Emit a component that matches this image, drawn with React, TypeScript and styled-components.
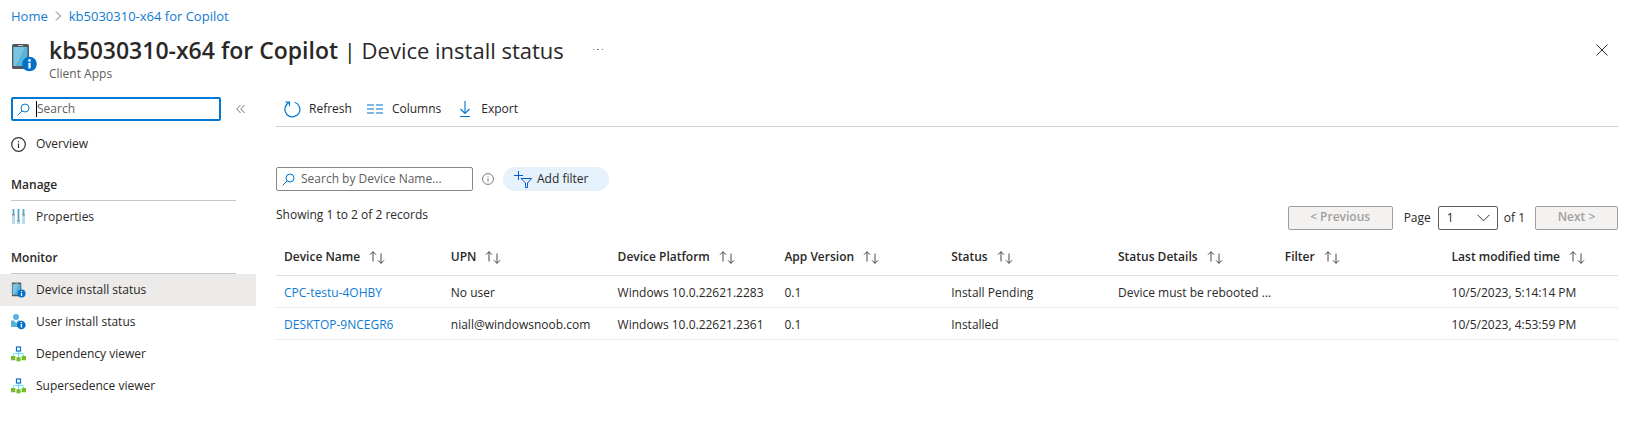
import React from 'react';
import styled, { createGlobalStyle } from 'styled-components';

const color = {
  text: '#292827',
  muted: '#605e5c',
  link: '#0f7bd3',
  accent: '#0078d4',
  line: '#c8c6c4',
  faint: '#edebe9',
};

const GlobalStyle = createGlobalStyle`
  * { box-sizing: border-box; }
  body {
    margin: 0;
    background: #fff;
    color: ${color.text};
    font-family: "Segoe UI", "Open Sans", "Noto Sans", sans-serif;
    font-size: 12px;
    line-height: 16px;
  }
  button, input, select { font: inherit; color: inherit; }
  a { color: ${color.link}; text-decoration: none; }
  svg { display: block; flex: none; }
`;

const Page = styled.div`
  display: flex;
  flex-direction: column;
`;

const Breadcrumb = styled.nav`
  display: flex;
  align-items: center;
  gap: 7px;
  height: 32px;
  padding: 0 11px;
  font-size: 13px;
`;

const Header = styled.header`
  display: flex;
  align-items: flex-start;
  height: 60px;
  padding: 0 18px 0 11px;
`;

const HeaderIcon = styled.div`
  width: 38px;
  padding-top: 11px;
`;

const Titles = styled.div`
  display: flex;
  flex-direction: column;
  padding-top: 2px;
`;

const Title = styled.h1`
  margin: 0;
  font-size: 22px;
  line-height: 32px;
  font-weight: 400;
  white-space: nowrap;

  strong { font-size: 23px; font-weight: 600; }
`;

const Subtitle = styled.span`
  color: ${color.muted};
`;

const IconButton = styled.button<{ $gap?: number }>`
  display: flex;
  align-items: center;
  justify-content: center;
  width: 24px;
  height: 24px;
  padding: 0;
  margin-left: ${(p) => p.$gap ?? 0}px;
  border: 0;
  background: none;
  color: ${color.muted};
`;

const HeaderActions = styled.div`
  display: flex;
  flex: 1;
  align-items: center;
  justify-content: space-between;
  height: 36px;
`;

const Body = styled.div`
  display: flex;
`;

const Sidebar = styled.aside`
  flex: none;
  width: 256px;
  padding-top: 5px;
`;

const SidebarSearchRow = styled.div`
  display: flex;
  align-items: center;
  gap: 7px;
  padding-left: 11px;
`;

const SearchBox = styled.label<{ $active?: boolean; $width: number }>`
  display: flex;
  align-items: center;
  width: ${(p) => p.$width}px;
  height: 24px;
  padding: 0 ${(p) => (p.$active ? 4 : 5)}px;
  border: ${(p) => (p.$active ? `2px solid ${color.accent}` : '1px solid #8a8886')};
  border-radius: 2px;
`;

const Caret = styled.span`
  flex: none;
  width: 1px;
  height: 16px;
  background: #000;
`;

const SearchInput = styled.input`
  flex: 1;
  min-width: 0;
  padding: 0;
  border: 0;
  outline: 0;
  background: none;

  &::placeholder { color: ${color.muted}; opacity: 1; }
`;

const SearchGlyph = styled.span`
  margin-right: 6px;
`;

const NavList = styled.ul<{ $top?: number }>`
  margin: ${(p) => p.$top ?? 0}px 0 0;
  padding: 0;
  list-style: none;
`;

const NavLink = styled.a<{ $selected?: boolean }>`
  display: flex;
  align-items: center;
  gap: 10px;
  height: 32px;
  padding-left: 11px;
  color: ${color.text};
  background: ${(p) => (p.$selected ? color.faint : 'transparent')};
`;

const NavHeading = styled.h2`
  margin: 0 20px 0 11px;
  padding: 17px 0 7px;
  border-bottom: 1px solid ${color.line};
  font-size: 12px;
  line-height: 16px;
  font-weight: 600;
`;

const Main = styled.main`
  flex: 1;
  min-width: 0;
  padding: 0 14px 0 20px;
`;

const Toolbar = styled.div`
  display: flex;
  gap: 15px;
  height: 35px;
  padding-left: 8px;
  border-bottom: 1px solid #d2d0ce;
`;

const ToolButton = styled.button`
  display: flex;
  align-items: center;
  gap: 8px;
  height: 34px;
  padding: 0;
  border: 0;
  background: none;
`;

const FilterRow = styled.div`
  display: flex;
  align-items: center;
  margin-top: 40px;
`;

const FilterButton = styled.button`
  display: flex;
  align-items: center;
  gap: 5px;
  width: 106px;
  height: 24px;
  margin-left: 9px;
  padding: 0 11px;
  border: 0;
  border-radius: 12px;
  background: #e5f1fb;
`;

const InfoMark = styled.span`
  margin-left: 9px;
`;

const RecordsRow = styled.div`
  display: flex;
  align-items: flex-start;
  justify-content: space-between;
  margin-top: 15px;
`;

const Pager = styled.div`
  display: flex;
  align-items: center;
`;

const RecordCount = styled.span`
  line-height: 18px;
`;

const PageButton = styled.button<{ $width: number }>`
  width: ${(p) => p.$width}px;
  height: 24px;
  padding: 0 0 2px;
  border: 1px solid #a19f9d;
  border-radius: 2px;
  background: #f3f2f1;
  color: #a19f9d;
  font-weight: 600;
  line-height: 16px;
`;

const PageLabel = styled.label`
  margin: 0 7px 0 11px;
`;

const PageTotal = styled.span`
  margin: 0 10px 0 6px;
`;

const SelectWrap = styled.span`
  display: grid;
  align-items: center;
  width: 60px;
  height: 24px;

  > * { grid-area: 1 / 1; }
  > svg { justify-self: end; margin-right: 8px; pointer-events: none; }
`;

const PageSelect = styled.select`
  appearance: none;
  width: 100%;
  height: 24px;
  padding: 0 8px;
  border: 1px solid #605e5c;
  border-radius: 2px;
  background: #fff;
`;

const Table = styled.table`
  width: 100%;
  margin-top: 10px;
  border-collapse: collapse;
  table-layout: fixed;
`;

const Col = styled.col<{ $last?: boolean }>`
  width: ${(p) => (p.$last ? 'auto' : '12.43%')};
`;

const HeadCell = styled.th`
  height: 35px;
  padding: 0 0 0 8px;
  border-bottom: 1px solid #e1dfdd;
  font-weight: 600;
  text-align: left;
`;

const SortButton = styled.button`
  display: flex;
  align-items: center;
  gap: 9px;
  padding: 0;
  border: 0;
  background: none;
  font-weight: 600;
  white-space: nowrap;
`;

const Cell = styled.td`
  height: 32px;
  padding: 3px 0 0 8px;
  border-bottom: 1px solid ${color.faint};
  overflow: hidden;
  text-overflow: ellipsis;
  white-space: nowrap;
`;

const SearchIcon = () => (
  <svg width="13" height="13" viewBox="0 0 13 13" fill="none" stroke="#0078d4">
    <circle cx="8" cy="5" r="4" />
    <path d="M5 8L.7 12.3" />
  </svg>
);

const ChevronRight = () => (
  <svg width="7" height="12" viewBox="0 0 7 12" fill="none" stroke="#797775">
    <path d="M1 1.5L5.5 6L1 10.5" />
  </svg>
);

const InfoBadge = () => (
  <>
    <circle cx="18.5" cy="21" r="7.3" fill="#0072c9" />
    <rect x="17.4" y="19.8" width="2.2" height="5.6" fill="#fff" />
    <circle cx="18.5" cy="17.4" r="1.3" fill="#fff" />
  </>
);

const DeviceIcon = ({ width = 26, height = 29 }: { width?: number; height?: number }) => (
  <svg width={width} height={height} viewBox="0 0 26 29">
    <rect x="1" y="1" width="17" height="25" rx="1.5" fill="#54585b" />
    <rect x="2.5" y="4" width="14" height="19" fill="#59b4d9" />
    <path d="M2.5 4H14L5 23H2.5z" fill="#7ac3e1" />
    <rect x="7" y="2" width="5" height="1" fill="#c8c6c4" />
    <InfoBadge />
  </svg>
);

const UserIcon = () => (
  <svg width="15" height="16" viewBox="0 0 15 16">
    <circle cx="5" cy="3" r="3" fill="#59b4d9" />
    <path d="M0 13V6.5h3L5 9l2-2.5h2.5V13z" fill="#59b4d9" />
    <circle cx="10.3" cy="11" r="4.3" fill="#0072c9" />
    <path d="M9.7 10h1.4v3.6H9.7zM9.7 8h1.4v1.3H9.7z" fill="#fff" />
  </svg>
);

const TreeIcon = () => (
  <svg width="15" height="16" viewBox="0 0 15 16" fill="none">
    <path d="M7.5 5V12M2.5 11V8.5Q2.5 7.5 3.5 7.5H11.5Q12.5 7.5 12.5 8.5V11" stroke="#50e6ff" />
    <rect x="5.5" y="1" width="4" height="4" fill="#fff" stroke="#0f6fc6" strokeWidth="1.2" />
    <path d="M0 10h4.4v4.2H0zM5.4 11.2h4.2v4H5.4zM10.6 10H15v4.2h-4.4z" fill="#76bc2d" />
  </svg>
);

const SlidersIcon = () => (
  <svg width="15" height="16" viewBox="0 0 15 16">
    <path d="M1 0h3v15H1zM6 0h3v15H6zM11 0h3v15h-3z" fill="#b9dded" />
    <path d="M2 0h1v5H2zM7 0h1v11H7zM12 0h1v5h-1z" fill="#59a5c4" />
    <path d="M1 5h3v1.4H1zM6 11h3v1.4H6zM11 5h3v1.4h-3z" fill="#8a9aa3" />
  </svg>
);

const InfoCircle = ({ size = 15, stroke = '#323130' }: { size?: number; stroke?: string }) => (
  <svg width={size} height={size} viewBox="0 0 15 15" fill="none" stroke={stroke}>
    <circle cx="7.5" cy="7.5" r="6.8" strokeWidth="1.2" />
    <path d="M7.5 6.5V11M7.5 4V5.3" strokeWidth="1.2" />
  </svg>
);

const RefreshIcon = () => (
  <svg width="17" height="17" viewBox="0 0 17 17" fill="none" stroke="#0078d4" strokeWidth="1.2">
    <path d="M10.8 1.3A7.5 7.5 0 1 1 4.8 1.8" />
    <path d="M1.5 1.2H5.5V5.2" />
  </svg>
);

const ColumnsIcon = () => (
  <svg width="17" height="17" viewBox="0 0 17 17" fill="#7db7e8">
    <path d="M0 3h7v2H0zM9 3h7v2H9zM0 7h7v2H0zM9 7h7v2H9zM0 11h7v2H0zM9 11h7v2H9z" />
  </svg>
);

const ExportIcon = () => (
  <svg width="17" height="17" viewBox="0 0 17 17" fill="none" stroke="#0078d4">
    <path d="M9 0V12" stroke="#4a9fe0" strokeWidth="1.6" />
    <path d="M4.5 8L9 12.5L13.5 8" strokeWidth="1.2" />
    <path d="M4 15.5H14" />
  </svg>
);

const FilterIcon = () => (
  <svg width="18" height="17" viewBox="0 0 18 17" fill="none" stroke="#015cda">
    <path d="M4.5 0V9M0 4.5H9" />
    <path d="M7 7.5H17.5L13.5 12V16.5H11.5V12z" />
  </svg>
);

const SortIcon = () => (
  <svg width="16" height="13" viewBox="0 0 16 13" fill="none" stroke="#484644">
    <path d="M4 10.5V.7M1 3.7L4 .7L7 3.7" />
    <path d="M12 2.5V12.3M9 9.3L12 12.3L15 9.3" />
  </svg>
);

const CollapseIcon = () => (
  <svg width="9" height="10" viewBox="0 0 9 10" fill="none" stroke="#797775">
    <path d="M4.5 1L.8 5L4.5 9M8.5 1L4.8 5L8.5 9" />
  </svg>
);

const monitorItems = [
  { label: 'Device install status', icon: <DeviceIcon width={15} height={16} />, selected: true },
  { label: 'User install status', icon: <UserIcon /> },
  { label: 'Dependency viewer', icon: <TreeIcon /> },
  { label: 'Supersedence viewer', icon: <TreeIcon /> },
];

const columns = [
  'Device Name', 'UPN', 'Device Platform', 'App Version',
  'Status', 'Status Details', 'Filter', 'Last modified time',
];

const rows = [
  ['CPC-testu-4OHBY', 'No user', 'Windows 10.0.22621.2283', '0.1', 'Install Pending', 'Device must be rebooted ...', '', '10/5/2023, 5:14:14 PM'],
  ['DESKTOP-9NCEGR6', 'niall@windowsnoob.com', 'Windows 10.0.22621.2361', '0.1', 'Installed', '', '', '10/5/2023, 4:53:59 PM'],
];

export default function App() {
  return (
    <Page>
      <GlobalStyle />
      <Breadcrumb aria-label="Breadcrumb">
        <a href="#home">Home</a>
        <ChevronRight />
        <a href="#app">kb5030310-x64 for Copilot</a>
      </Breadcrumb>
      <Header>
        <HeaderIcon><DeviceIcon /></HeaderIcon>
        <Titles>
          <Title><strong>kb5030310-x64 for Copilot</strong> | Device install status</Title>
          <Subtitle>Client Apps</Subtitle>
        </Titles>
        <HeaderActions>
          <IconButton $gap={22} aria-label="More">
            <svg width="12" height="2" viewBox="0 0 12 2" fill="#797775">
              <path d="M1 0h1v1H1zM5 0h2v1H5zM10 0h1v1h-1z" />
            </svg>
          </IconButton>
          <IconButton aria-label="Close">
            <svg width="12" height="12" viewBox="0 0 12 12" stroke="#323130">
              <path d="M.5 .5L11.5 11.5M11.5 .5L.5 11.5" />
            </svg>
          </IconButton>
        </HeaderActions>
      </Header>
      <Body>
        <Sidebar>
          <SidebarSearchRow>
            <SearchBox $active $width={210}>
              <SearchGlyph><SearchIcon /></SearchGlyph>
              <Caret />
              <SearchInput type="text" placeholder="Search" aria-label="Search" />
            </SearchBox>
            <IconButton aria-label="Collapse menu"><CollapseIcon /></IconButton>
          </SidebarSearchRow>
          <NavList $top={7}>
            <li><NavLink href="#overview"><InfoCircle />Overview</NavLink></li>
          </NavList>
          <NavHeading>Manage</NavHeading>
          <NavList>
            <li><NavLink href="#properties"><SlidersIcon />Properties</NavLink></li>
          </NavList>
          <NavHeading>Monitor</NavHeading>
          <NavList>
            {monitorItems.map((item) => (
              <li key={item.label}>
                <NavLink href="#monitor" $selected={item.selected}>{item.icon}{item.label}</NavLink>
              </li>
            ))}
          </NavList>
        </Sidebar>
        <Main>
          <Toolbar>
            <ToolButton><RefreshIcon />Refresh</ToolButton>
            <ToolButton><ColumnsIcon />Columns</ToolButton>
            <ToolButton><ExportIcon />Export</ToolButton>
          </Toolbar>
          <FilterRow>
            <SearchBox $width={197}>
              <SearchGlyph><SearchIcon /></SearchGlyph>
              <SearchInput type="text" placeholder="Search by Device Name..." aria-label="Search by device name" />
            </SearchBox>
            <InfoMark><InfoCircle size={12} stroke="#797775" /></InfoMark>
            <FilterButton><FilterIcon />Add filter</FilterButton>
          </FilterRow>
          <RecordsRow>
            <RecordCount>Showing 1 to 2 of 2 records</RecordCount>
            <Pager>
              <PageButton $width={105} disabled>&lt; Previous</PageButton>
              <PageLabel htmlFor="page">Page</PageLabel>
              <SelectWrap>
                <PageSelect id="page" defaultValue="1"><option>1</option></PageSelect>
                <svg width="13" height="8" viewBox="0 0 13 8" fill="none" stroke="#323130">
                  <path d="M.5 .8L6.5 6.8L12.5 .8" />
                </svg>
              </SelectWrap>
              <PageTotal>of 1</PageTotal>
              <PageButton $width={83} disabled>Next &gt;</PageButton>
            </Pager>
          </RecordsRow>
          <Table>
            <colgroup>
              {columns.map((name, i) => <Col key={name} $last={i === columns.length - 1} />)}
            </colgroup>
            <thead>
              <tr>
                {columns.map((name) => (
                  <HeadCell key={name} scope="col"><SortButton>{name}<SortIcon /></SortButton></HeadCell>
                ))}
              </tr>
            </thead>
            <tbody>
              {rows.map((row) => (
                <tr key={row[0]}>
                  {row.map((value, i) => (
                    <Cell key={columns[i]}>{i === 0 ? <a href="#device">{value}</a> : value}</Cell>
                  ))}
                </tr>
              ))}
            </tbody>
          </Table>
        </Main>
      </Body>
    </Page>
  );
}
